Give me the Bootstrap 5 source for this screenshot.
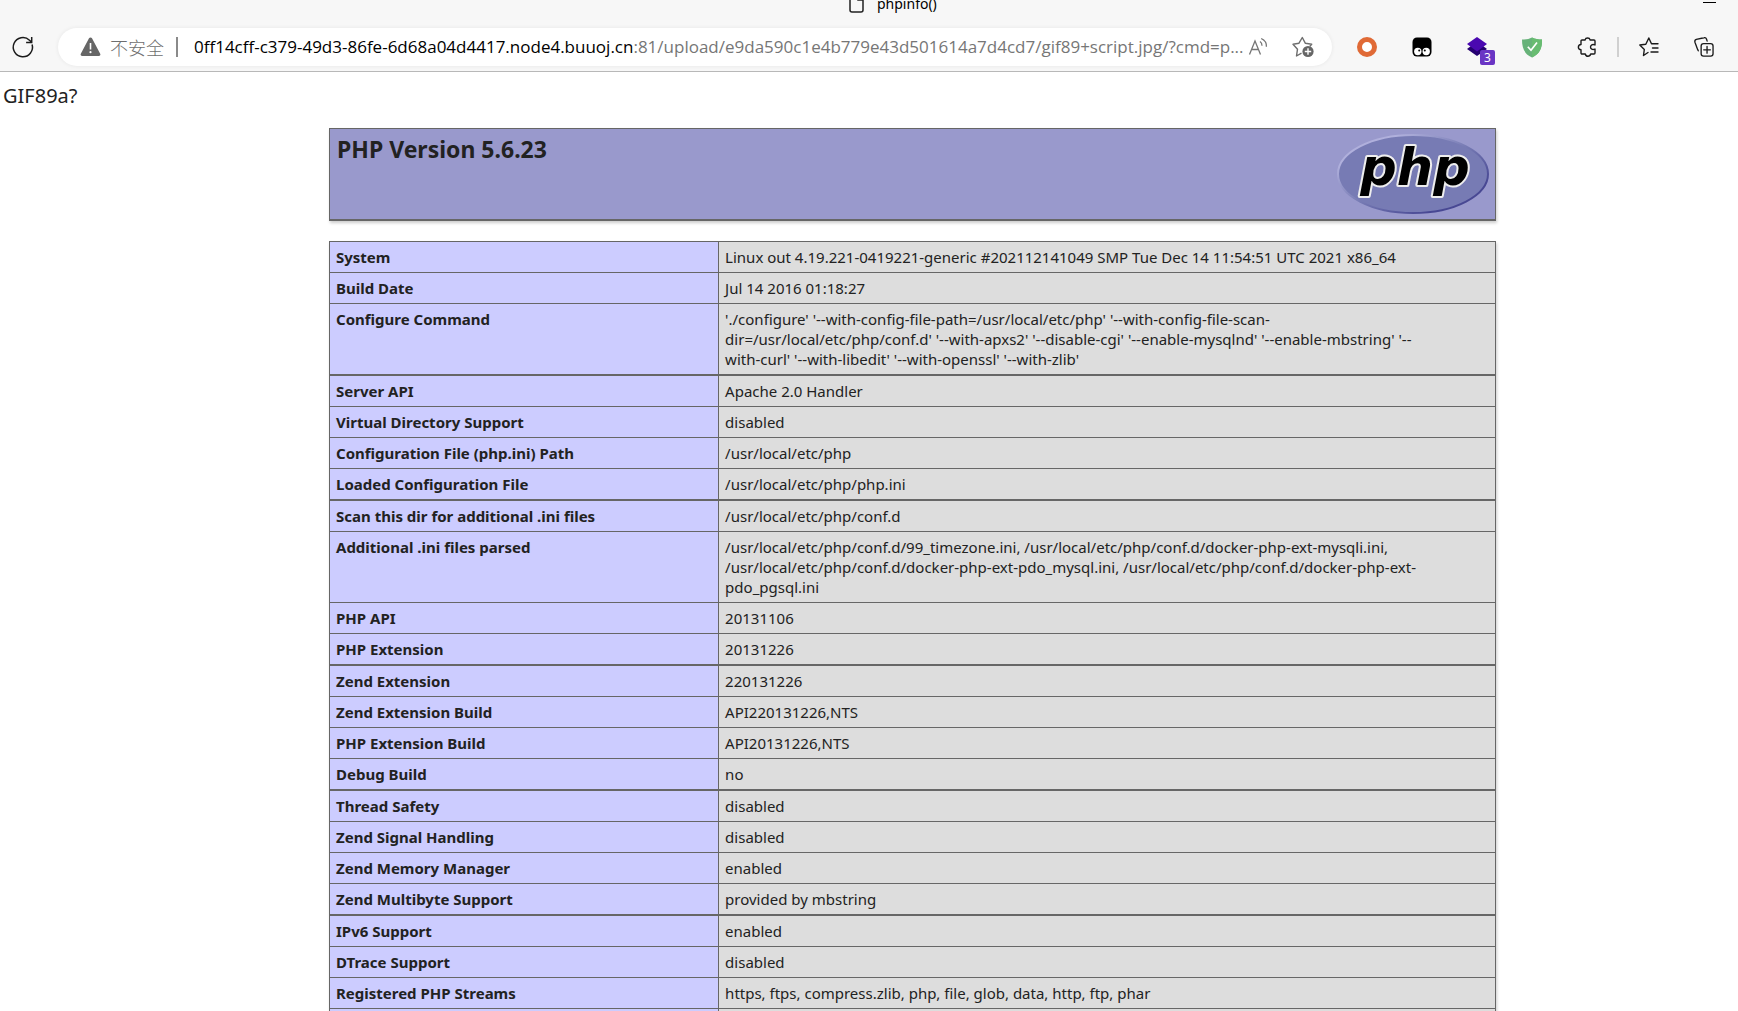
<!DOCTYPE html>
<html lang="zh-CN">
<head>
<meta charset="utf-8">
<meta name="viewport" content="width=device-width, initial-scale=1">
<title>phpinfo()</title>
<link href="https://cdn.jsdelivr.net/npm/bootstrap@5.3.0/dist/css/bootstrap.min.css" rel="stylesheet">
<style>
body { font-family: "Noto Sans", "Open Sans", "Noto Sans CJK SC", sans-serif; color: #222; overflow-x: hidden; }
.chrome { background: #f7f7f7; border-bottom: 1px solid #b8b8b8; height: 72px; }
.tab-strip { height: 28px; color: #000; }
.tab-title { font-size: 14px; line-height: 20px; margin-top: -6px; gap: 13px; margin-left: 849px; }
.tab-title svg { margin-top: -2px; }
.win-min { width: 13px; height: 1px; background: #000; margin: 2px 22px 0 0; }
.toolbar-row { height: 38px; }
.tool { border: 0; background: none; padding: 0; line-height: 0; color: #1b1b1b; }
.tool svg, .address svg, .tab-title svg { display: block; flex: none; overflow: visible; }
.reload { margin: 0 24px 0 12px; }
.address { background: #fff; border-radius: 19px; box-shadow: 0 0 4px rgba(0,0,0,.07); padding: 0 17px 0 22px; height: 38px; color: #6e6e6e; min-width: 0; }
.insecure { font-size: 18px; line-height: 24px; font-family: "Noto Sans CJK SC", sans-serif; font-weight: 300; margin: 0 12px 0 9px; white-space: nowrap; }
.bar { width: 2px; height: 20px; background: #8a8a8a; }
.url { font-family: "Open Sans", "Noto Sans", sans-serif; font-size: 17px; line-height: 24px; margin-left: 16px; white-space: nowrap; overflow: hidden; color: #767676; }
.url b { font-weight: 400; color: #000; }
.tools { gap: 35px; padding: 0 24px 0 25px; }
.count { font-size: 12px; line-height: 15px; width: 15px; height: 15px; right: -8px; bottom: -8px; background: #6a35c4; color: #fff; border-radius: 2px; text-align: center; }
.split { width: 2px; height: 20px; background: #d0d0d0; margin: 0 -15px; }
.gif-head { font-size: 20px; line-height: 28px; padding: 10px 3px 0; }
.info { max-width: 1167px; margin-left: calc(50% - 540px); padding-top: 18px; }
.version { background: #9999cc; border: 1px solid #666; border-bottom-width: 2px; box-shadow: 1px 2px 3px #ccc; height: 93px; padding: 5px 6px 5px 7px; margin-bottom: 20px; }
.version h1 { font-size: 23px; line-height: 30px; font-weight: 700; margin: 0; }
.facts { width: 100%; table-layout: fixed; border-collapse: separate; border-spacing: 0; font-size: 15px; line-height: 20px; border: 1px solid #666; border-bottom: 0; box-shadow: 1px 2px 3px #ccc; }
.facts th, .facts td { border-bottom: 1px solid #666; padding: 5px 6px; vertical-align: top; overflow-wrap: break-word; }
.facts th { width: 33.4%; background: #ccccff; font-weight: 700; border-right: 1px solid #666; }
.facts td { background: #ddd; }
.facts .thick > * { border-bottom-width: 2px; }
</style>
</head>
<body>
<header class="chrome">
  <div class="tab-strip d-flex justify-content-between align-items-start">
    <div class="tab-title d-flex align-items-center">
      <svg width="15" height="19" viewBox="0 0 15 19" fill="none" stroke="#222" stroke-width="1.5"><path d="M3 1h6l5 5v10a2 2 0 0 1-2 2H3a2 2 0 0 1-2-2V3a2 2 0 0 1 2-2zM9 1v5h5"/></svg>
      <span>phpinfo()</span>
    </div>
    <div class="win-min"></div>
  </div>
  <div class="toolbar-row d-flex align-items-center">
    <button class="tool reload" type="button" aria-label="刷新"><svg width="22" height="22" viewBox="0 0 22 22" fill="none" stroke="currentColor" stroke-width="1.5"><path d="M20.1 8.5A9.6 9.6 0 1 1 17.5 4.2L19.5 6M19.7 1v5.4h-5.6"/></svg></button>
    <div class="address d-flex align-items-center flex-grow-1">
      <svg width="21" height="20" viewBox="0 0 21 20"><path d="M9 1.3a1.7 1.7 0 0 1 3 0l8.2 15.4a1.6 1.6 0 0 1-1.4 2.4H2.2a1.6 1.6 0 0 1-1.4-2.4z" fill="#666"/><path d="M10.5 6v6.5" stroke="#fff" stroke-width="1.6"/><circle cx="10.5" cy="15.2" r="1.1" fill="#fff"/></svg>
      <span class="insecure">不安全</span>
      <span class="bar"></span>
      <div class="url flex-grow-1" role="textbox" aria-label="地址"><b>0ff14cff-c379-49d3-86fe-6d68a04d4417.node4.buuoj.cn</b>:81/upload/e9da590c1e4b779e43d501614a7d4cd7/gif89+script.jpg/?cmd=p...</div>
      <button class="tool me-4" type="button" aria-label="朗读"><svg width="20" height="20" viewBox="0 0 20 20" fill="none" stroke="#767676" stroke-width="1.3"><path d="M1.500 17.500 7 4l5.500 13.500M3.500 12.500h7M12 4.500c1.400 1 2.100 2.400 2 4.300M13.200 1.500c3.500 1.600 5.500 4.800 5.200 8.300"/></svg></button>
      <button class="tool" type="button" aria-label="收藏"><svg width="23" height="22" viewBox="0 0 23 22" fill="none" stroke="#6e6e6e" stroke-width="1.4" stroke-linejoin="round"><path d="M9.500 17.200 4.500 20l1-6.800L1 8.200l6-1L10.300 1.500 13.400 7.300l6.300 1-2 2.200"/><circle cx="16" cy="15.500" r="5.600" fill="#666" stroke="none"/><path d="M16 12.300v6.400M12.800 15.500h6.400" stroke="#fff"/></svg></button>
    </div>
    <div class="tools d-flex align-items-center">
      <button class="tool" type="button" aria-label="扩展一"><svg width="20" height="20" viewBox="0 0 20 20"><circle cx="10" cy="10" r="7.500" fill="#fff" stroke="#e06a36" stroke-width="5"/></svg></button>
      <button class="tool" type="button" aria-label="扩展二"><svg width="20" height="20" viewBox="0 0 20 20"><rect x=".5" y=".5" width="19" height="19" rx="4.500" fill="#000"/><circle cx="5.800" cy="14.500" r="3.700" fill="#fff"/><circle cx="14.200" cy="14.500" r="3.700" fill="#fff"/><circle cx="7.200" cy="13.500" r="1" fill="#000"/><circle cx="12.800" cy="13.500" r="1" fill="#000"/></svg></button>
      <button class="tool position-relative" type="button" aria-label="扩展三"><svg width="20" height="20" viewBox="0 0 20 20"><path d="m0 12 4-3h12l4 3-10 7z" fill="#250070"/><path d="m10 0 10 7-10 7.500L0 7z" fill="#4a08b0"/></svg><span class="count position-absolute">3</span></button>
      <button class="tool" type="button" aria-label="扩展四"><svg width="20" height="21" viewBox="0 0 20 21"><path d="M10 .5C13 2 16 2.500 20 2.500c.3 8-2 14.500-10 18C2 17 0 10.500 0 2.500c4 0 7-.5 10-2z" fill="#67b279"/><path d="M10 .5c3 1.500 6 2 10 2 .3 8-2 14.500-10 18z" fill="#68bc71"/><path d="m5.800 9.800 3.200 3.500 6-7.800" fill="none" stroke="#fff" stroke-width="1.700"/></svg></button>
      <button class="tool" type="button" aria-label="扩展"><svg width="20" height="20" viewBox="0 0 20 20" fill="none" stroke="currentColor" stroke-width="1.400" stroke-linejoin="round"><path d="M5 3h3a2.700 2.700 0 0 1 5.200 0H17a1 1 0 0 1 1 1v4c-2.500-1.300-4.500 0-4.500 2s2 3.300 4.500 2v4a1 1 0 0 1-1 1h-3.300c-.8 3-4.800 3-5.400 0H5a1 1 0 0 1-1-1v-3.300c-3.500 0-3.500-5 0-5.200V4a1 1 0 0 1 1-1z"/></svg></button>
      <span class="split"></span>
      <button class="tool" type="button" aria-label="收藏夹"><svg width="20" height="20" viewBox="0 0 20 20" fill="none" stroke="currentColor" stroke-width="1.400" stroke-linejoin="round" stroke-linecap="round"><path d="m9 15.500-4.500 3 .8-6L.8 8l6-.8L9.800 1l2.700 5.800H19M13.500 11H19M12 15h7"/></svg></button>
      <button class="tool" type="button" aria-label="集锦"><svg width="20" height="20" viewBox="0 0 21 21" fill="none" stroke="currentColor" stroke-width="1.400" stroke-linecap="round"><path d="M4.500 14.500 3.800 13 1 5.500c-.4-1.400.2-2.600 1.500-3L10.500.8c1.200-.3 2.300.3 2.700 1.500l.6 2"/><rect x="7.500" y="7" width="12.500" height="13" rx="2.500"/><path d="M13.700 10v7M10.200 13.500h7"/></svg></button>
    </div>
  </div>
</header>
<div class="gif-head">GIF89a?</div>
<main class="info">
  <div class="version d-flex justify-content-between align-items-start">
    <h1>PHP Version 5.6.23</h1>
    <svg width="152" height="82" viewBox="0 0 152 82" role="img" aria-label="PHP logo">
      <defs><linearGradient id="rim" x1="0" y1="0" x2="1" y2="1"><stop offset=".2" stop-color="#b0b0dc"/><stop offset=".5" stop-color="#777bb4"/><stop offset=".8" stop-color="#484893"/></linearGradient></defs>
      <ellipse cx="76" cy="40" rx="75" ry="39" fill="#777bb4" stroke="url(#rim)" stroke-width="2"/>
      <text x="78" y="51" text-anchor="middle" font-family="DejaVu Sans" font-weight="700" font-style="italic" font-size="51" fill="#000" stroke="#eee" stroke-width="4" paint-order="stroke" stroke-linejoin="round">php</text>
    </svg>
  </div>
  <table class="facts">
    <tbody>
      <tr><th scope="row">System</th><td>Linux out 4.19.221-0419221-generic #202112141049 SMP Tue Dec 14 11:54:51 UTC 2021 x86_64</td></tr>
      <tr><th scope="row">Build Date</th><td>Jul 14 2016 01:18:27</td></tr>
      <tr class="thick"><th scope="row">Configure Command</th><td>'./configure' '--with-config-file-path=/usr/local/etc/php' '--with-config-file-scan-<br>dir=/usr/local/etc/php/conf.d' '--with-apxs2' '--disable-cgi' '--enable-mysqlnd' '--enable-mbstring' '--<br>with-curl' '--with-libedit' '--with-openssl' '--with-zlib'</td></tr>
      <tr><th scope="row">Server API</th><td>Apache 2.0 Handler</td></tr>
      <tr><th scope="row">Virtual Directory Support</th><td>disabled</td></tr>
      <tr><th scope="row">Configuration File (php.ini) Path</th><td>/usr/local/etc/php</td></tr>
      <tr class="thick"><th scope="row">Loaded Configuration File</th><td>/usr/local/etc/php/php.ini</td></tr>
      <tr><th scope="row">Scan this dir for additional .ini files</th><td>/usr/local/etc/php/conf.d</td></tr>
      <tr><th scope="row">Additional .ini files parsed</th><td>/usr/local/etc/php/conf.d/99_timezone.ini, /usr/local/etc/php/conf.d/docker-php-ext-mysqli.ini, /usr/local/etc/php/conf.d/docker-php-ext-pdo_mysql.ini, /usr/local/etc/php/conf.d/docker-php-ext-pdo_pgsql.ini</td></tr>
      <tr><th scope="row">PHP API</th><td>20131106</td></tr>
      <tr class="thick"><th scope="row">PHP Extension</th><td>20131226</td></tr>
      <tr><th scope="row">Zend Extension</th><td>220131226</td></tr>
      <tr><th scope="row">Zend Extension Build</th><td>API220131226,NTS</td></tr>
      <tr><th scope="row">PHP Extension Build</th><td>API20131226,NTS</td></tr>
      <tr class="thick"><th scope="row">Debug Build</th><td>no</td></tr>
      <tr><th scope="row">Thread Safety</th><td>disabled</td></tr>
      <tr><th scope="row">Zend Signal Handling</th><td>disabled</td></tr>
      <tr><th scope="row">Zend Memory Manager</th><td>enabled</td></tr>
      <tr class="thick"><th scope="row">Zend Multibyte Support</th><td>provided by mbstring</td></tr>
      <tr><th scope="row">IPv6 Support</th><td>enabled</td></tr>
      <tr><th scope="row">DTrace Support</th><td>disabled</td></tr>
      <tr><th scope="row">Registered PHP Streams</th><td>https, ftps, compress.zlib, php, file, glob, data, http, ftp, phar</td></tr>
      <tr><th scope="row">&nbsp;</th><td></td></tr>
    </tbody>
  </table>
</main>
<script src="https://cdn.jsdelivr.net/npm/bootstrap@5.3.0/dist/js/bootstrap.bundle.min.js"></script>
</body>
</html>
